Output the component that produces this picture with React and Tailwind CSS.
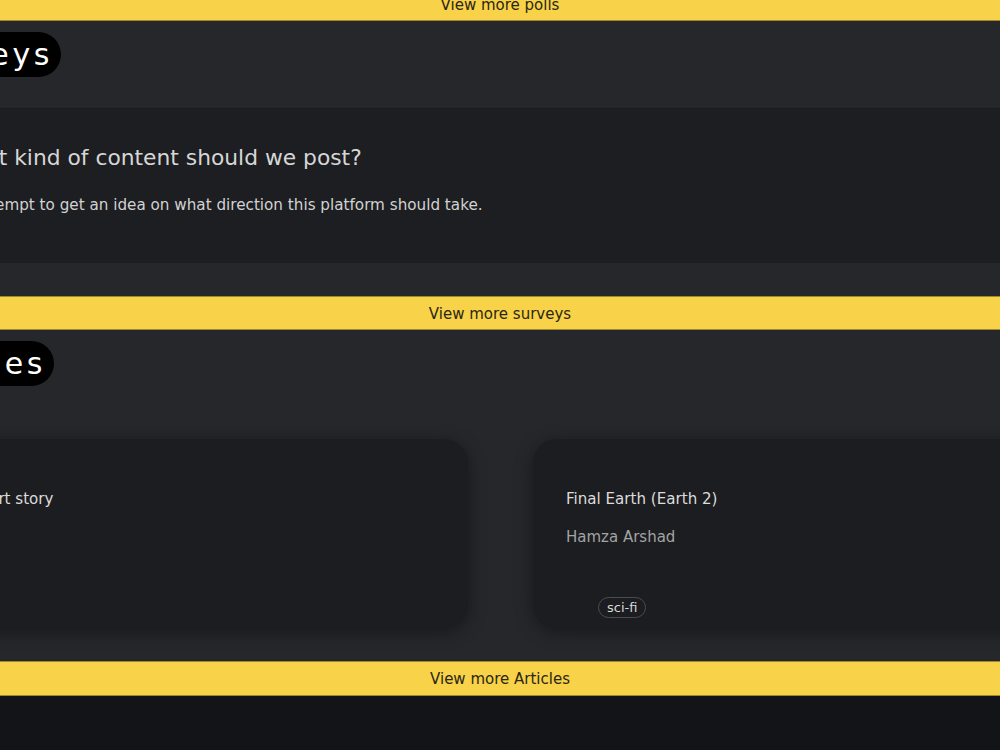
export default function App() {
  const font = { fontFamily: '"DejaVu Sans", Verdana, sans-serif' };
  const Bar = ({ children, className = "" }) => (
    <div
      className={`h-[34px] shrink-0 bg-[#f8d248] border-y border-[#9f882c] flex items-center justify-center pt-[2px] text-[15px] text-[#2b2713] ${className}`}
    >
      {children}
    </div>
  );
  const Pill = ({ children, w }) => (
    <div className={`${w} flex justify-end`}>
      <div className="shrink-0 h-[45px] pl-4 pr-2 rounded-full bg-black text-white text-[30px] tracking-[0.12em] flex items-center leading-none">
        {children}
      </div>
    </div>
  );
  return (
    <div style={font} className="w-[1000px] h-[750px] overflow-hidden bg-[#25272b] flex flex-col">
      <Bar className="-mt-[13px]">View more polls</Bar>

      <section className="pt-[11px] pb-[33px] flex flex-col">
        <Pill w="w-[61px]">Surveys</Pill>
        <div className="mt-[31px] h-[155px] bg-[#1d1e21] border-t border-[#1a1b1e] flex flex-col">
          <div className="-ml-[50px] pt-[35px]">
            <h3 className="text-[21.8px] leading-[28px] text-[#d6d6d6] whitespace-nowrap">
              What kind of content should we post?
            </h3>
            <p className="mt-[22px] -ml-px text-[15.2px] leading-[22px] text-[#d2d2d2] whitespace-nowrap">
              An attempt to get an idea on what direction this platform should take.
            </p>
          </div>
        </div>
      </section>

      <Bar>View more surveys</Bar>

      <section className="pt-[11px] pb-[33px] flex flex-col">
        <Pill w="w-[54px]">Articles</Pill>
        <div className="mt-[53px] -ml-[63px] flex gap-[65px]">
          <div className="w-[531px] shrink-0 h-[189px] rounded-[24px] bg-[#1c1d20] shadow-[0_4px_18px_rgba(0,0,0,0.4)] pt-[49px] pl-[33px]">
            <div className="text-[15.1px] leading-[22px] text-[#dcdcdc]">Short story</div>
          </div>
          <div className="w-[531px] shrink-0 h-[189px] rounded-[24px] bg-[#1c1d20] shadow-[0_4px_18px_rgba(0,0,0,0.4)] pt-[49px] pl-[33px] flex flex-col">
            <div className="text-[15.1px] leading-[22px] text-[#dcdcdc]">Final Earth (Earth 2)</div>
            <div className="mt-[16px] text-[15px] leading-[22px] text-[#a3a3a3]">Hamza Arshad</div>
            <div className="mt-[49px] ml-8 flex">
              <span className="h-[21px] px-2 rounded-full border border-[#4b4c50] text-[13px] text-[#d8d8d8] flex items-center">
                sci-fi
              </span>
            </div>
          </div>
        </div>
      </section>

      <Bar className="h-[35px]">View more Articles</Bar>
      <div className="flex-1 bg-[#131417]" />
    </div>
  );
}
